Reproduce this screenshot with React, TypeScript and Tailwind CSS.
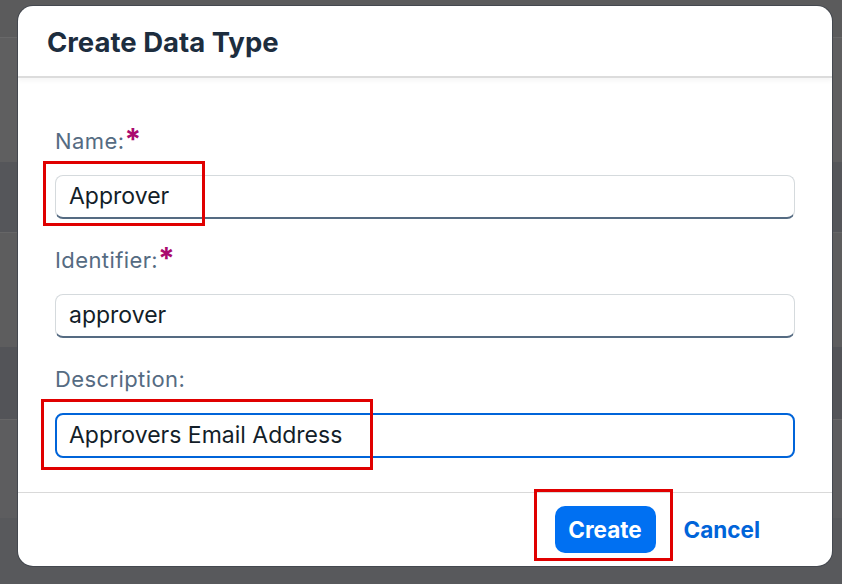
import React from "react";

function Field({
  label,
  required,
  value,
  focused,
}: {
  label: string;
  required?: boolean;
  value: string;
  focused?: boolean;
}) {
  return (
    <div className="flex flex-col">
      <div className="h-[28px] flex items-center text-[22px] tracking-[0.4px] text-[#556b82] leading-none">
        <span>{label}</span>
        {required && (
          <span className="text-[#aa0a6e] font-bold text-[30px] relative top-[-2px] leading-none">*</span>
        )}
      </div>
      <div
        className={
          focused
            ? "mt-[20px] h-[45px] rounded-[8px] border-2 border-[#0064d9] bg-white flex items-center px-[12px] text-[23px] text-[#131e29]"
            : "mt-[20px] h-[44px] rounded-[8px] border border-[#d5dadd] border-b-[2px] border-b-[#556b82] bg-white flex items-center px-[13px] text-[23px] text-[#131e29]"
        }
      >
        {value}
      </div>
    </div>
  );
}

export default function App() {
  return (
    <div
      className="relative w-[842px] h-[584px] overflow-hidden bg-[#5a5b5d]"
      style={{ fontFamily: "Inter, 'Noto Sans', sans-serif" }}
    >
      <div className="flex flex-col w-full h-full">
        <div className="h-[37px] bg-[#5b5b5c]" />
        <div className="h-[125px] bg-[#5f5f60] border-t border-[#686869]" />
        <div className="h-[70px] bg-[#55565a]" />
        <div className="h-[115px] bg-[#5d5d5e] border-t border-[#666667]" />
        <div className="h-[72px] bg-[#535458]" />
        <div className="h-[99px] bg-[#5d5d5f] border-t border-[#666667]" />
        <div className="flex-1 bg-[#58595c]" />
      </div>

      <div className="absolute left-[17px] top-[5px] w-[816px] h-[562px] rounded-[16px] bg-[#44484f] p-[1px]">
        <div className="w-full h-full rounded-[15px] bg-white flex flex-col overflow-hidden">
          <div className="h-[72px] flex items-center pl-[29px] pt-[3px] border-b-2 border-[#dcdcdc] shadow-[0_3px_4px_rgba(0,0,0,0.04)]">
            <h1 className="text-[27.5px] font-bold text-[#1d2d3e]">Create Data Type</h1>
          </div>
          <div className="flex-1 flex flex-col px-[37px] pt-[49px] gap-[27px] border-b border-[#d9d9d9]">
            <div className="relative">
              <Field label="Name:" required value="Approver" />
              <div className="absolute left-[-12px] top-[34px] w-[162px] h-[65px] border-[3px] border-[#e00000]" />
            </div>
            <div>
              <Field label="Identifier:" required value="approver" />
            </div>
            <div className="relative">
              <Field label="Description:" value="Approvers Email Address" focused />
              <div className="absolute left-[-14px] top-[34px] w-[332px] h-[71px] border-[3px] border-[#e00000]" />
            </div>
          </div>
          <div className="h-[73px] flex items-center justify-end pr-[57px] gap-[13px]">
            <div className="relative">
              <button className="h-[47px] w-[101px] rounded-[10px] bg-[#0070f2] text-white font-bold text-[22.5px]">
                Create
              </button>
              <div className="absolute left-[-21px] top-[-17px] w-[139px] h-[72px] border-[3px] border-[#e00000]" />
            </div>
            <button className="h-[47px] px-[15px] text-[#0064d9] font-bold text-[22.5px]">Cancel</button>
          </div>
        </div>
      </div>
    </div>
  );
}
